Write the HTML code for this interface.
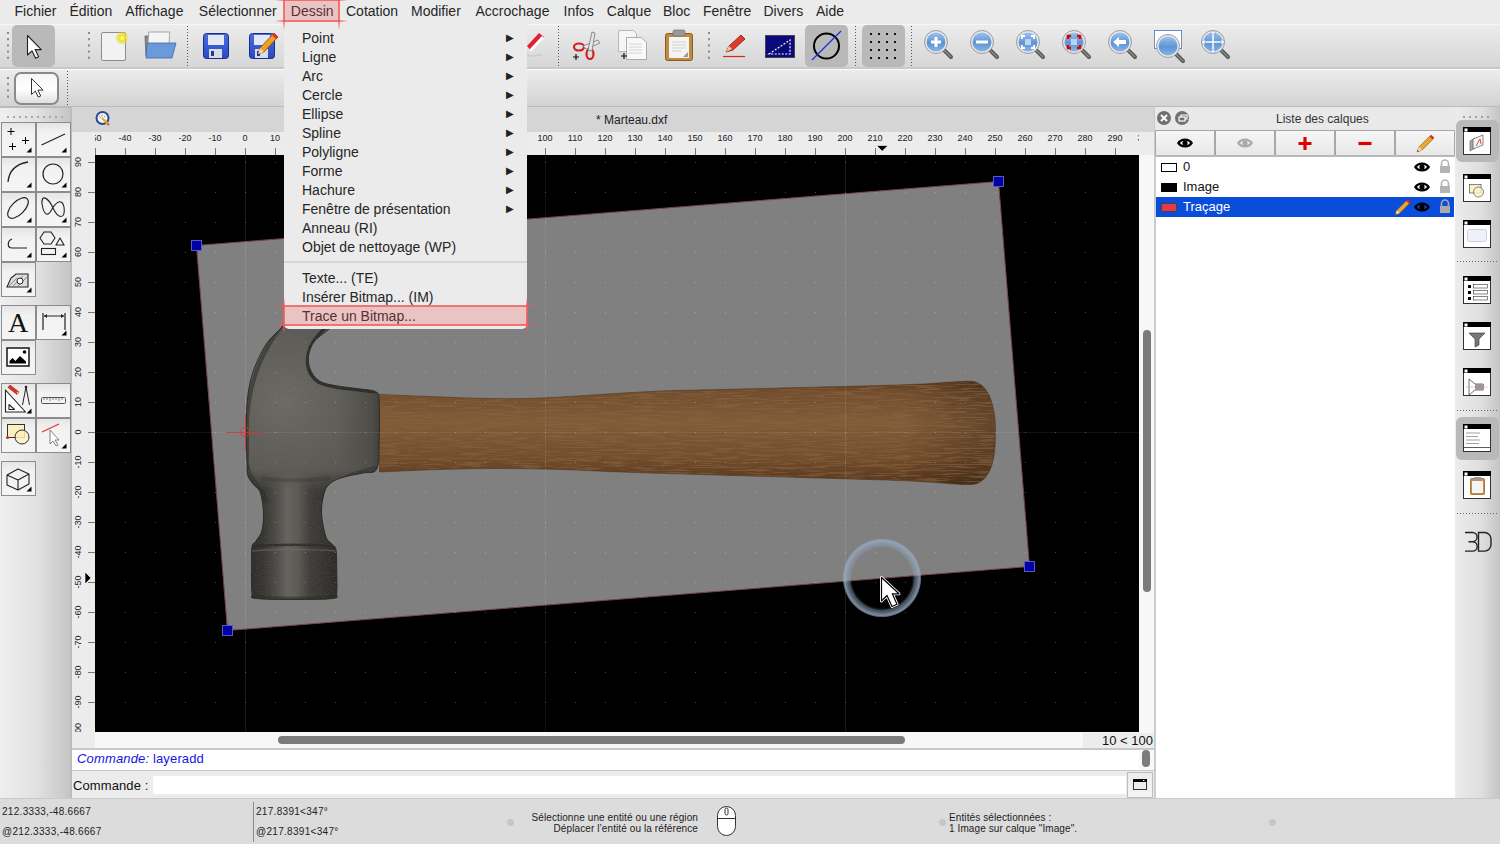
<!DOCTYPE html><html><head><meta charset="utf-8"><style>

*{margin:0;padding:0;box-sizing:border-box}
html,body{width:1500px;height:844px;overflow:hidden;background:#ececec;font-family:"Liberation Sans",sans-serif;color:#222;position:relative}
.abs{position:absolute}
#menubar{position:absolute;left:0;top:0;width:1500px;height:24px;background:#ebebeb}
.mi{position:absolute;top:3px;font-size:14px;line-height:17px;color:#262626}

#tb1{position:absolute;left:0;top:24px;width:1500px;height:45px;background:linear-gradient(#ececec,#d6d6d6);border-top:1px solid #f6f6f6;border-bottom:2px solid #c9c9c9}
#tb2{position:absolute;left:0;top:69px;width:1500px;height:39px;background:linear-gradient(#ececec,#d3d3d3);border-top:1px solid #fbfbfb;border-bottom:2px solid #bababa}
#ltb{position:absolute;left:0;top:108px;width:72px;height:690px;background:linear-gradient(90deg,#efefef,#e2e2e2 50%,#c6c6c6);border-right:2px solid #bdbdbd}
#dwin{position:absolute;left:72px;top:107px;width:1083px;height:691px;background:#ececec;border-left:1px solid #bdbdbd}
#dtitle{position:absolute;left:72px;top:107px;width:1083px;height:25px;background:#d5d5d5}
#ruler{position:absolute;left:72px;top:132px;width:1083px;height:23px;background:#ececec}
#vruler{position:absolute;left:72px;top:155px;width:23px;height:593px;background:#ececec}
#cv{position:absolute;left:0;top:0}
#hscroll{position:absolute;left:95px;top:732px;width:1060px;height:16px;background:#f7f7f7}
#hthumb{position:absolute;left:278px;top:736px;width:627px;height:8px;border-radius:4px;background:#7b7b7b}
#vscroll{position:absolute;left:1139px;top:155px;width:16px;height:577px;background:#f7f7f7}
#vthumb{position:absolute;left:1143px;top:330px;width:8px;height:262px;border-radius:4px;background:#7b7b7b}
#zoomlbl{position:absolute;left:1083px;top:733px;width:71px;height:15px;background:#ececec;font-size:13px;line-height:16px;text-align:right;color:#111;padding-right:1px}
#cmdhist{position:absolute;left:72px;top:748px;width:1083px;height:23px;background:#fff;border-top:2px solid #c8c8c8;border-bottom:1px solid #c8c8c8}
#cmdhist span{position:absolute;left:5px;top:0px;font-size:13px;line-height:17px;color:#1515e0;letter-spacing:0.15px}
#cmdbar{position:absolute;left:72px;top:771px;width:1083px;height:27px;background:#ececec}
#cmdinput{position:absolute;left:153px;top:776px;width:973px;height:18px;background:#fff}
#lp{position:absolute;left:1155px;top:107px;width:300px;height:691px;background:#fff;border-left:1px solid #cfcfcf}
#lptitle{position:absolute;left:1155px;top:107px;width:300px;height:23px;background:#e9e9e9}
#rtb{position:absolute;left:1455px;top:107px;width:45px;height:691px;background:linear-gradient(90deg,#ececec,#dedede 60%,#c4c4c4)}
#status{position:absolute;left:0;top:798px;width:1500px;height:46px;background:#dcdcdc;border-top:1px solid #c9c9c9}
.st{position:absolute;font-size:10px;letter-spacing:0.3px;line-height:12px;color:#222;white-space:nowrap}
#dd{position:absolute;left:284px;top:24px;width:243px;height:305px;background:#ebebeb;border-radius:0 0 5px 5px}
.ddi{position:absolute;left:18px;font-size:14px;line-height:19px;color:#262626;white-space:nowrap}
.dda{position:absolute;left:222px;font-size:10px;line-height:19px;color:#222}
#ddsep{position:absolute;left:0px;top:237px;width:243px;height:2px;background:#d6d6d6}

.lrow{position:absolute;left:1156px;width:298px;height:20px}
.lrow span{position:absolute;left:27px;top:2px;font-size:13px;line-height:16px;color:#111}
.sw{position:absolute;left:5px;top:6px;width:16px;height:9px}
.ltbtn{position:absolute;top:130px;height:26px;background:linear-gradient(#f6f6f6,#e8e8e8);border:1px solid #a8a8a8}
.tbox{position:absolute;width:35px;height:35px;background:linear-gradient(#fafafa,#e6e6e6);border:1px solid #8e8e8e}

</style></head><body>
<div id="menubar"><span class="mi" style="left:14.5px">Fichier</span><span class="mi" style="left:69.5px">Édition</span><span class="mi" style="left:125.3px">Affichage</span><span class="mi" style="left:198.8px">Sélectionner</span><span class="mi" style="left:290.8px">Dessin</span><span class="mi" style="left:346px">Cotation</span><span class="mi" style="left:411px">Modifier</span><span class="mi" style="left:475.5px">Accrochage</span><span class="mi" style="left:563.5px">Infos</span><span class="mi" style="left:606.8px">Calque</span><span class="mi" style="left:663px">Bloc</span><span class="mi" style="left:703px">Fenêtre</span><span class="mi" style="left:763.5px">Divers</span><span class="mi" style="left:816px">Aide</span></div>
<div id="tb1"></div><div id="tb2"></div>
<svg class="abs" style="left:0;top:0" width="1500" height="110"><defs><linearGradient id="lens" x1="0" y1="0" x2="0" y2="1"><stop offset="0" stop-color="#9cc2ee"/><stop offset="0.55" stop-color="#5d93d6"/><stop offset="1" stop-color="#8ab4e6"/></linearGradient><linearGradient id="flop" x1="0" y1="0" x2="0" y2="1"><stop offset="0" stop-color="#4a6fe0"/><stop offset="1" stop-color="#2a48c0"/></linearGradient><linearGradient id="btn2" x1="0" y1="0" x2="0" y2="1"><stop offset="0" stop-color="#f4f4f4"/><stop offset="0.5" stop-color="#ffffff"/><stop offset="1" stop-color="#dedede"/></linearGradient><radialGradient id="glow"><stop offset="0" stop-color="#ffffc0"/><stop offset="0.45" stop-color="#f0e020"/><stop offset="1" stop-color="#e8d820" stop-opacity="0"/></radialGradient></defs><rect x="7" y="32.0" width="2" height="2" fill="#8a8a8a"/><rect x="7" y="38.2" width="2" height="2" fill="#8a8a8a"/><rect x="7" y="44.4" width="2" height="2" fill="#8a8a8a"/><rect x="7" y="50.6" width="2" height="2" fill="#8a8a8a"/><rect x="7" y="56.8" width="2" height="2" fill="#8a8a8a"/><rect x="12" y="25" width="43" height="42" rx="5" fill="#b9b9b9"/><path d="M27.5,35.5v19.5l4.5,-4.2l3.6,7.4l3,-1.4l-3.5,-7.2h6.2z" fill="#fff" stroke="#222" stroke-width="1.1" stroke-linejoin="round"/><rect x="88" y="32.0" width="2" height="2" fill="#8a8a8a"/><rect x="88" y="38.2" width="2" height="2" fill="#8a8a8a"/><rect x="88" y="44.4" width="2" height="2" fill="#8a8a8a"/><rect x="88" y="50.6" width="2" height="2" fill="#8a8a8a"/><rect x="88" y="56.8" width="2" height="2" fill="#8a8a8a"/><rect x="101.5" y="32.5" width="24" height="28" rx="1.5" fill="#f2f2f2" stroke="#8c8c8c" stroke-width="1"/><circle cx="122" cy="38" r="7" fill="url(#glow)"/><path d="M145,36h8l2,2h4v18h-13z" fill="#8a8a8a" stroke="#666" stroke-width="0.8"/><path d="M151,32h21v20h-21z" fill="#f4f4f4" stroke="#999" stroke-width="0.8" transform="skewX(-4)"/><path d="M147,43h29l-4,15h-26z" fill="#6a9ad8" stroke="#3a6ab0" stroke-width="0.8"/><line x1="187.5" y1="26" x2="187.5" y2="67" stroke="#555" stroke-width="1" stroke-dasharray="1,2"/><rect x="203.5" y="33.5" width="25" height="25" rx="3" fill="url(#flop)" stroke="#1c2a8a" stroke-width="1"/><rect x="208" y="35" width="16" height="10" fill="#e4e8f4"/><rect x="209" y="49" width="13" height="9" fill="#d8dce8"/><rect x="211" y="51" width="3" height="5" fill="#1c3aa0"/><rect x="249.5" y="33.5" width="25" height="25" rx="3" fill="url(#flop)" stroke="#1c2a8a" stroke-width="1"/><rect x="254" y="35" width="16" height="10" fill="#e4e8f4"/><rect x="255" y="49" width="13" height="9" fill="#d8dce8"/><rect x="257" y="51" width="3" height="5" fill="#1c3aa0"/><path d="M258,54l2,-6l14,-15l4,4l-14,15z" fill="#f0a020" stroke="#7a4a10" stroke-width="0.8"/><path d="M272,35l4,4l2,-2l-4,-4z" fill="#e03030"/><path d="M258,54l2,-6l4,4z" fill="#f4d8a8"/><g transform="translate(527,32)"><path d="M0,14l12,-13l5,4l-13,14z" fill="#e02030"/><path d="M2,18l13,-14l2,2l-13,14z" fill="#fff"/><path d="M0,22l3,2l12,-1" stroke="#ccc" stroke-width="1.5" fill="none"/></g><line x1="558.5" y1="26" x2="558.5" y2="67" stroke="#555" stroke-width="1" stroke-dasharray="1,2"/><g fill="none" stroke="#d02020" stroke-width="2.2"><ellipse cx="579" cy="47" rx="5" ry="3.5"/><ellipse cx="590" cy="54" rx="3.5" ry="5"/></g><path d="M583,46l15,-6l2,3l-14,6z" fill="#e4e4e4" stroke="#777" stroke-width="0.8"/><path d="M588,50l4,-18l3,1l-3,18z" fill="#e4e4e4" stroke="#777" stroke-width="0.8"/><path d="M573,57h6M576,54v6" stroke="#111" stroke-width="1.2"/><path d="M618.5,30.5h15l3,3v18h-18z" fill="#f6f6f6" stroke="#aaa" stroke-width="0.8"/><path d="M626.5,37.5h15l5,5v17h-20z" fill="#f8f8f8" stroke="#999" stroke-width="0.8"/><path d="M629,44h13M629,47h13M629,50h13M629,53h13" stroke="#ccc" stroke-width="0.8"/><path d="M621,56h6M624,53v6" stroke="#111" stroke-width="1.2"/><rect x="665.5" y="33.5" width="27" height="27" rx="2" fill="#c08a40" stroke="#8a5a20" stroke-width="1"/><rect x="669" y="37" width="20" height="21" fill="#f4f4f4"/><rect x="673" y="30" width="12" height="6" rx="1.5" fill="#9a9a9a" stroke="#666" stroke-width="0.6"/><path d="M672,42h14M672,45h14M672,48h14M672,51h10" stroke="#c8c8c8" stroke-width="0.8"/><path d="M683,57l5,-5v5z" fill="#999"/><rect x="708" y="32.0" width="2" height="2" fill="#8a8a8a"/><rect x="708" y="38.2" width="2" height="2" fill="#8a8a8a"/><rect x="708" y="44.4" width="2" height="2" fill="#8a8a8a"/><rect x="708" y="50.6" width="2" height="2" fill="#8a8a8a"/><rect x="708" y="56.8" width="2" height="2" fill="#8a8a8a"/><path d="M726,52l3,-6l12,-11l4,4l-12,11z" fill="#e03a2a" stroke="#8a1a10" stroke-width="0.8"/><path d="M726,52l3,-6l3,3z" fill="#f0d0a0"/><path d="M723,56.5h22" stroke="#e02020" stroke-width="1.2"/><rect x="765.5" y="35.5" width="29" height="22" fill="#0a0a7a" stroke="#445" stroke-width="1"/><path d="M769,54l21,-14v14z" fill="none" stroke="#fff" stroke-width="1.2" stroke-dasharray="2,1.5"/><rect x="805" y="25" width="43" height="42" rx="5" fill="#b9b9b9"/><circle cx="826.5" cy="46" r="12.5" fill="none" stroke="#000" stroke-width="2"/><path d="M812,60l29,-29" stroke="#1a30e0" stroke-width="1.3"/><line x1="855.5" y1="26" x2="855.5" y2="67" stroke="#555" stroke-width="1" stroke-dasharray="1,2"/><rect x="862" y="25" width="43" height="42" rx="5" fill="#b9b9b9"/><rect x="870" y="33" width="2" height="2" fill="#111"/><rect x="870" y="41" width="2" height="2" fill="#111"/><rect x="870" y="49" width="2" height="2" fill="#111"/><rect x="870" y="57" width="2" height="2" fill="#111"/><rect x="878" y="33" width="2" height="2" fill="#111"/><rect x="878" y="41" width="2" height="2" fill="#111"/><rect x="878" y="49" width="2" height="2" fill="#111"/><rect x="878" y="57" width="2" height="2" fill="#111"/><rect x="886" y="33" width="2" height="2" fill="#111"/><rect x="886" y="41" width="2" height="2" fill="#111"/><rect x="886" y="49" width="2" height="2" fill="#111"/><rect x="886" y="57" width="2" height="2" fill="#111"/><rect x="894" y="33" width="2" height="2" fill="#111"/><rect x="894" y="41" width="2" height="2" fill="#111"/><rect x="894" y="49" width="2" height="2" fill="#111"/><rect x="894" y="57" width="2" height="2" fill="#111"/><line x1="911.5" y1="26" x2="911.5" y2="67" stroke="#555" stroke-width="1" stroke-dasharray="1,2"/><g><path d="M944,50l7,7" stroke="#555" stroke-width="4" stroke-linecap="round"/><path d="M944,50l7,7" stroke="#888" stroke-width="1.5" stroke-linecap="round"/><circle cx="936" cy="42" r="11.5" fill="#e8e8e8" stroke="#9a9a9a" stroke-width="1"/><circle cx="936" cy="42" r="9.5" fill="url(#lens)"/><path d="M931,42h10M936,37v10" stroke="#fff" stroke-width="3"/></g><g><path d="M990,50l7,7" stroke="#555" stroke-width="4" stroke-linecap="round"/><path d="M990,50l7,7" stroke="#888" stroke-width="1.5" stroke-linecap="round"/><circle cx="982" cy="42" r="11.5" fill="#e8e8e8" stroke="#9a9a9a" stroke-width="1"/><circle cx="982" cy="42" r="9.5" fill="url(#lens)"/><path d="M976,42h12" stroke="#fff" stroke-width="3"/></g><g><path d="M1036,50l7,7" stroke="#555" stroke-width="4" stroke-linecap="round"/><path d="M1036,50l7,7" stroke="#888" stroke-width="1.5" stroke-linecap="round"/><circle cx="1028" cy="42" r="11.5" fill="#e8e8e8" stroke="#9a9a9a" stroke-width="1"/><circle cx="1028" cy="42" r="9.5" fill="url(#lens)"/><path d="M1022,39v-3h3M1031,36h3v3M1034,45v3h-3M1025,48h-3v-3" stroke="#fff" stroke-width="1.8" fill="none"/><rect x="1025" y="39" width="6" height="6" fill="#bcd4f0"/></g><g><path d="M1082,50l7,7" stroke="#555" stroke-width="4" stroke-linecap="round"/><path d="M1082,50l7,7" stroke="#888" stroke-width="1.5" stroke-linecap="round"/><circle cx="1074" cy="42" r="11.5" fill="#e8e8e8" stroke="#9a9a9a" stroke-width="1"/><circle cx="1074" cy="42" r="9.5" fill="url(#lens)"/><path d="M1068,39v-3h3M1077,36h3v3M1080,45v3h-3M1071,48h-3v-3" stroke="#e00000" stroke-width="2.5" fill="none"/><rect x="1071" y="39" width="6" height="6" fill="#bcd4f0"/></g><g><path d="M1128,50l7,7" stroke="#555" stroke-width="4" stroke-linecap="round"/><path d="M1128,50l7,7" stroke="#888" stroke-width="1.5" stroke-linecap="round"/><circle cx="1120" cy="42" r="11.5" fill="#e8e8e8" stroke="#9a9a9a" stroke-width="1"/><circle cx="1120" cy="42" r="9.5" fill="url(#lens)"/><path d="M1113,42l6,-5v3h7v4h-7v3z" fill="#fff"/></g><rect x="1154.5" y="30.5" width="27" height="18" fill="#fff" stroke="#6c8cc8" stroke-width="1"/><g><path d="M1176,54l7,7" stroke="#555" stroke-width="4" stroke-linecap="round"/><path d="M1176,54l7,7" stroke="#888" stroke-width="1.5" stroke-linecap="round"/><circle cx="1168" cy="46" r="11.5" fill="#e8e8e8" stroke="#9a9a9a" stroke-width="1"/><circle cx="1168" cy="46" r="9.5" fill="url(#lens)"/></g><g><path d="M1221,50l7,7" stroke="#555" stroke-width="4" stroke-linecap="round"/><path d="M1221,50l7,7" stroke="#888" stroke-width="1.5" stroke-linecap="round"/><circle cx="1213" cy="42" r="11.5" fill="#e8e8e8" stroke="#9a9a9a" stroke-width="1"/><circle cx="1213" cy="42" r="9.5" fill="url(#lens)"/><path d="M1213,31v22M1202,42h22" stroke="#fff" stroke-width="1.5"/><path d="M1213,30l-3,4h6zM1213,54l-3,-4h6zM1201,42l4,-3v6zM1225,42l-4,-3v6z" fill="#fff" stroke="#5a8ad0" stroke-width="0.6"/></g><rect x="7" y="77.0" width="2" height="2" fill="#8a8a8a"/><rect x="7" y="83.2" width="2" height="2" fill="#8a8a8a"/><rect x="7" y="89.4" width="2" height="2" fill="#8a8a8a"/><rect x="7" y="95.6" width="2" height="2" fill="#8a8a8a"/><rect x="15" y="73" width="43" height="31" rx="6" fill="url(#btn2)" stroke="#8a8a8a" stroke-width="2"/><path d="M31.5,78.5v16l3.8,-3.4l3,6l2.4,-1.1l-2.8,-5.9h5.2z" fill="#fff" stroke="#333" stroke-width="1" stroke-linejoin="round"/><line x1="67.5" y1="71" x2="67.5" y2="106" stroke="#555" stroke-width="1" stroke-dasharray="1,2"/></svg>
<div id="ltb"></div>
<svg class="abs" style="left:0;top:107px" width="72" height="400"><defs><linearGradient id="tbg" x1="0" y1="0" x2="0" y2="1"><stop offset="0" stop-color="#e4e4e4"/><stop offset="0.3" stop-color="#f2f2f2"/><stop offset="1" stop-color="#f5f5f5"/></linearGradient></defs><rect x="7" y="9" width="2" height="2" fill="#a8a8a8"/><rect x="13" y="9" width="2" height="2" fill="#a8a8a8"/><rect x="19" y="9" width="2" height="2" fill="#a8a8a8"/><rect x="25" y="9" width="2" height="2" fill="#a8a8a8"/><rect x="31" y="9" width="2" height="2" fill="#a8a8a8"/><rect x="37" y="9" width="2" height="2" fill="#a8a8a8"/><rect x="43" y="9" width="2" height="2" fill="#a8a8a8"/><rect x="49" y="9" width="2" height="2" fill="#a8a8a8"/><rect x="55" y="9" width="2" height="2" fill="#a8a8a8"/><rect x="61" y="9" width="2" height="2" fill="#a8a8a8"/><rect x="1.5" y="15.5" width="34" height="34" fill="url(#tbg)" stroke="#8c8c8c" stroke-width="1"/><rect x="36.5" y="15.5" width="34" height="34" fill="url(#tbg)" stroke="#8c8c8c" stroke-width="1"/><rect x="1.5" y="50.5" width="34" height="34" fill="url(#tbg)" stroke="#8c8c8c" stroke-width="1"/><rect x="36.5" y="50.5" width="34" height="34" fill="url(#tbg)" stroke="#8c8c8c" stroke-width="1"/><rect x="1.5" y="85.5" width="34" height="34" fill="url(#tbg)" stroke="#8c8c8c" stroke-width="1"/><rect x="36.5" y="85.5" width="34" height="34" fill="url(#tbg)" stroke="#8c8c8c" stroke-width="1"/><rect x="1.5" y="120.5" width="34" height="34" fill="url(#tbg)" stroke="#8c8c8c" stroke-width="1"/><rect x="36.5" y="120.5" width="34" height="34" fill="url(#tbg)" stroke="#8c8c8c" stroke-width="1"/><rect x="1.5" y="155.5" width="34" height="34" fill="url(#tbg)" stroke="#8c8c8c" stroke-width="1"/><path d="M7.5,24.5h7M11,21v7 M22,33.5h7M25.5,30v7 M9,39.5h7M12.5,36v7" stroke="#000" stroke-width="1"/><path d="M31.5,40.5v5h-5z" fill="#000"/><path d="M41.5,38l23.5,-11" stroke="#222" stroke-width="1.1"/><path d="M66.5,40.5v5h-5z" fill="#000"/><path d="M8,75C9,64 16,57 28,55" stroke="#222" stroke-width="1.3" fill="none"/><path d="M31.5,75.5v5h-5z" fill="#000"/><circle cx="53" cy="67" r="10" stroke="#222" stroke-width="1.2" fill="none"/><path d="M66.5,75.5v5h-5z" fill="#000"/><ellipse cx="18" cy="101" rx="13" ry="6.5" transform="rotate(-45 18 101)" stroke="#222" stroke-width="1.2" fill="none"/><path d="M31.5,110.5v5h-5z" fill="#000"/><path d="M42,97C41,87 48,90 53,101C58,112 66,113 64,100C62,91 56,95 52,102C48,110 44,109 42,97z" stroke="#222" stroke-width="1.1" fill="none"/><path d="M66.5,110.5v5h-5z" fill="#000"/><path d="M12,132C7,134 7,141 12,141h15" stroke="#222" stroke-width="1.2" fill="none"/><path d="M31.5,145.5v5h-5z" fill="#000"/><path d="M40,131l4,-6h7l4,6l-4,6h-7z" stroke="#222" stroke-width="1.1" fill="none"/><path d="M56,138l4,-7l4,7z" stroke="#222" stroke-width="1.1" fill="none"/><rect x="41.5" y="141.5" width="14" height="6" stroke="#222" stroke-width="1.1" fill="none"/><path d="M66.5,145.5v5h-5z" fill="#000"/><path d="M7,180l4,-9l5,-4h12v13z" stroke="#222" stroke-width="1.1" fill="#ddd"/><path d="M9,179l8,-8M13,179l10,-10M18,179l9,-9" stroke="#666" stroke-width="0.7"/><circle cx="20" cy="174" r="3" fill="#fff" stroke="#222" stroke-width="1"/><path d="M31.5,180.5v5h-5z" fill="#000"/><rect x="1.5" y="198.5" width="34" height="34" fill="url(#tbg)" stroke="#8c8c8c" stroke-width="1"/><rect x="36.5" y="198.5" width="34" height="34" fill="url(#tbg)" stroke="#8c8c8c" stroke-width="1"/><rect x="1.5" y="233.5" width="34" height="34" fill="url(#tbg)" stroke="#8c8c8c" stroke-width="1"/><text x="18" y="225" font-family="Liberation Serif" font-size="28" text-anchor="middle" fill="#111">A</text><path d="M43,206v17M65,206v17M44,209h20" stroke="#222" stroke-width="1.2" fill="none"/><path d="M44,209l3,-2v4zM64,209l-3,-2v4z" fill="#222"/><path d="M66.5,223.5v5h-5z" fill="#000"/><rect x="7" y="241" width="22" height="18" fill="#fff" stroke="#222" stroke-width="1.6"/><path d="M9.5,256.5v-2.5l3,-3l3,3l4.5,-5l6,5.5v2z" fill="#000"/><circle cx="24.5" cy="245" r="1.8" fill="#000"/></svg><svg class="abs" style="left:0;top:380px" width="72" height="120"><rect x="1.5" y="3.5" width="34" height="34" fill="url(#tbg)" stroke="#8c8c8c" stroke-width="1"/><rect x="36.5" y="3.5" width="34" height="34" fill="url(#tbg)" stroke="#8c8c8c" stroke-width="1"/><rect x="1.5" y="38.5" width="34" height="34" fill="url(#tbg)" stroke="#8c8c8c" stroke-width="1"/><rect x="36.5" y="38.5" width="34" height="34" fill="url(#tbg)" stroke="#8c8c8c" stroke-width="1"/><rect x="1.5" y="81.5" width="34" height="34" fill="url(#tbg)" stroke="#8c8c8c" stroke-width="1"/><path d="M5.5,10v22h20z M9,24.5v5h5.5z" stroke="#222" stroke-width="1.1" fill="#fff" stroke-linejoin="round"/><path d="M10,5l9,7l-2,2.5l-9,-7z" fill="#e03020" stroke="#801010" stroke-width="0.5"/><path d="M17,12l2,2" stroke="#f0c080" stroke-width="1.5"/><path d="M26,7l-3.5,18M26,7l3.5,18" stroke="#222" stroke-width="1" fill="none"/><circle cx="26" cy="7" r="1.3" fill="#222"/><path d="M31.5,28.5v5h-5z" fill="#000"/><rect x="41.5" y="17.5" width="24" height="6" rx="1" fill="#f4f4f4" stroke="#555" stroke-width="1"/><path d="M44,18v2M47,18v2M50,18v3M53,18v2M56,18v2M59,18v3M62,18v2" stroke="#555" stroke-width="0.7"/><rect x="7.5" y="44.5" width="17" height="13" fill="#fdf0c0" stroke="#333" stroke-width="1"/><circle cx="22" cy="57" r="7" fill="#fdf0c0" fill-opacity="0.85" stroke="#333" stroke-width="1"/><circle cx="7.5" cy="57.5" r="1.5" fill="#e02020"/><path d="M42,52l17,-8" stroke="#e03030" stroke-width="1.2"/><path d="M50,50v14l3,-3l3,5l2,-1l-3,-5h4z" fill="#fff" stroke="#666" stroke-width="0.8"/><path d="M66.5,63.5v5h-5z" fill="#000"/><path d="M7,95l11,-6l11,5v10l-11,6l-11,-5z M7,95l11,5l11,-6 M18,100v10" stroke="#222" stroke-width="1.1" fill="none" stroke-linejoin="round"/><path d="M31.5,106.5v5h-5z" fill="#000"/></svg>
<div id="dwin"></div><div id="dtitle"><span class="abs" style="left:524px;top:6px;font-size:12px;line-height:15px;color:#222">* Marteau.dxf</span></div><svg class="abs" style="left:95px;top:111px" width="16" height="16"><circle cx="7.5" cy="7" r="6" fill="#f4f4f4" stroke="#2a4a9a" stroke-width="2"/><path d="M4,5l2,2M7,3.5v2M10,5l-1,1" stroke="#c06060" stroke-width="0.8"/><path d="M7,7l6,6" stroke="#e8b020" stroke-width="2.2"/><path d="M12.5,12.5l1.5,1.5" stroke="#d05050" stroke-width="2"/></svg><div id="ruler"></div><div id="vruler"></div>
<svg id="rul" width="1500" height="844" style="position:absolute;left:0;top:0">
<defs><clipPath id="hrc"><rect x="95" y="130" width="1044" height="25"/></clipPath><clipPath id="vrc"><rect x="72" y="155" width="23" height="577"/></clipPath></defs>
<g clip-path="url(#hrc)"><g font-family="Liberation Sans" font-size="9" fill="#222" text-anchor="middle">
<text x="95" y="141">-50</text>
<text x="125" y="141">-40</text>
<text x="155" y="141">-30</text>
<text x="185" y="141">-20</text>
<text x="215" y="141">-10</text>
<text x="245" y="141">0</text>
<text x="275" y="141">10</text>
<text x="305" y="141">20</text>
<text x="335" y="141">30</text>
<text x="365" y="141">40</text>
<text x="395" y="141">50</text>
<text x="425" y="141">60</text>
<text x="455" y="141">70</text>
<text x="485" y="141">80</text>
<text x="515" y="141">90</text>
<text x="545" y="141">100</text>
<text x="575" y="141">110</text>
<text x="605" y="141">120</text>
<text x="635" y="141">130</text>
<text x="665" y="141">140</text>
<text x="695" y="141">150</text>
<text x="725" y="141">160</text>
<text x="755" y="141">170</text>
<text x="785" y="141">180</text>
<text x="815" y="141">190</text>
<text x="845" y="141">200</text>
<text x="875" y="141">210</text>
<text x="905" y="141">220</text>
<text x="935" y="141">230</text>
<text x="965" y="141">240</text>
<text x="995" y="141">250</text>
<text x="1025" y="141">260</text>
<text x="1055" y="141">270</text>
<text x="1085" y="141">280</text>
<text x="1115" y="141">290</text>
<text x="1145" y="141">300</text>
</g>
<path d="M95.5,148v7M125.5,148v7M155.5,148v7M185.5,148v7M215.5,148v7M245.5,148v7M275.5,148v7M305.5,148v7M335.5,148v7M365.5,148v7M395.5,148v7M425.5,148v7M455.5,148v7M485.5,148v7M515.5,148v7M545.5,148v7M575.5,148v7M605.5,148v7M635.5,148v7M665.5,148v7M695.5,148v7M725.5,148v7M755.5,148v7M785.5,148v7M815.5,148v7M845.5,148v7M875.5,148v7M905.5,148v7M935.5,148v7M965.5,148v7M995.5,148v7M1025.5,148v7M1055.5,148v7M1085.5,148v7M1115.5,148v7M1145.5,148v7" stroke="#777" stroke-width="1"/></g>
<g clip-path="url(#vrc)"><g font-family="Liberation Sans" font-size="9" fill="#222" text-anchor="middle">
<text transform="translate(78,162) rotate(-90)" y="3">90</text>
<text transform="translate(78,192) rotate(-90)" y="3">80</text>
<text transform="translate(78,222) rotate(-90)" y="3">70</text>
<text transform="translate(78,252) rotate(-90)" y="3">60</text>
<text transform="translate(78,282) rotate(-90)" y="3">50</text>
<text transform="translate(78,312) rotate(-90)" y="3">40</text>
<text transform="translate(78,342) rotate(-90)" y="3">30</text>
<text transform="translate(78,372) rotate(-90)" y="3">20</text>
<text transform="translate(78,402) rotate(-90)" y="3">10</text>
<text transform="translate(78,432) rotate(-90)" y="3">0</text>
<text transform="translate(78,462) rotate(-90)" y="3">-10</text>
<text transform="translate(78,492) rotate(-90)" y="3">-20</text>
<text transform="translate(78,522) rotate(-90)" y="3">-30</text>
<text transform="translate(78,552) rotate(-90)" y="3">-40</text>
<text transform="translate(78,582) rotate(-90)" y="3">-50</text>
<text transform="translate(78,612) rotate(-90)" y="3">-60</text>
<text transform="translate(78,642) rotate(-90)" y="3">-70</text>
<text transform="translate(78,672) rotate(-90)" y="3">-80</text>
<text transform="translate(78,702) rotate(-90)" y="3">-90</text>
<text transform="translate(78,732) rotate(-90)" y="3">-100</text>
</g>
<path d="M88,162.5h7M88,192.5h7M88,222.5h7M88,252.5h7M88,282.5h7M88,312.5h7M88,342.5h7M88,372.5h7M88,402.5h7M88,432.5h7M88,462.5h7M88,492.5h7M88,522.5h7M88,552.5h7M88,582.5h7M88,612.5h7M88,642.5h7M88,672.5h7M88,702.5h7M88,732.5h7" stroke="#777" stroke-width="1"/></g>
<path d="M876.5,145.5h11.5l-5.75,5.75z" fill="#000" stroke="#fff" stroke-width="0.8" stroke-opacity="0.8"/>
<path d="M85,572v12l6,-6z" fill="#000" stroke="#fff" stroke-width="0.8" stroke-opacity="0.8"/>
</svg>
<svg id="cv" width="1500" height="844" viewBox="0 0 1500 844">
<defs><clipPath id="cclip"><rect x="95" y="155" width="1044" height="577"/></clipPath></defs>
<rect x="95" y="155" width="1044" height="577" fill="#000"/>
<g clip-path="url(#cclip)">
<polygon points="196.5,245.5 998.5,181.5 1029.5,566.5 227.5,630.5" fill="#808080" stroke="#7a4444" stroke-width="1"/>
<defs>
<linearGradient id="wood" x1="0" y1="0" x2="0" y2="1"><stop offset="0" stop-color="#5a3a1f"/><stop offset="0.1" stop-color="#724e2e"/><stop offset="0.4" stop-color="#825c38"/><stop offset="0.75" stop-color="#734d2c"/><stop offset="1" stop-color="#54361c"/></linearGradient>
<linearGradient id="woodend" x1="0" y1="0" x2="1" y2="0"><stop offset="0" stop-color="#000" stop-opacity="0"/><stop offset="0.85" stop-color="#000" stop-opacity="0"/><stop offset="1" stop-color="#000" stop-opacity="0.25"/></linearGradient>
<linearGradient id="metal" x1="246" y1="0" x2="380" y2="0" gradientUnits="userSpaceOnUse"><stop offset="0" stop-color="#45443f"/><stop offset="0.08" stop-color="#5f5d58"/><stop offset="0.3" stop-color="#67655f"/><stop offset="0.7" stop-color="#5a5853"/><stop offset="0.95" stop-color="#4a4945"/><stop offset="1" stop-color="#3a3936"/></linearGradient>
</defs>
<path d="M379.5,394.5C387.9,394.8 411.6,395.8 430.0,396.5C448.4,397.2 471.7,398.2 490.0,398.5C508.3,398.8 521.7,398.7 540.0,398.0C558.3,397.3 580.0,395.7 600.0,394.5C620.0,393.3 640.0,391.8 660.0,391.0C680.0,390.2 696.7,390.1 720.0,389.5C743.3,388.9 768.3,388.3 800.0,387.5C831.7,386.7 883.3,385.5 910.0,384.5C936.7,383.5 948.7,381.8 960.0,381.5C971.3,381.2 973.2,380.8 978.0,383.0C982.8,385.2 986.2,389.7 989.0,395.0C991.8,400.3 993.4,408.7 994.5,415.0C995.6,421.3 995.3,430.0 995.5,433.0C995.3,436.2 995.4,445.8 994.5,452.0C993.6,458.2 992.4,465.0 990.0,470.0C987.6,475.0 984.5,479.6 980.0,482.0C975.5,484.4 974.7,484.7 963.0,484.5C951.3,484.3 937.2,482.2 910.0,481.0C882.8,479.8 835.0,478.6 800.0,477.5C765.0,476.4 730.0,475.4 700.0,474.5C670.0,473.6 643.3,472.8 620.0,472.0C596.7,471.2 580.0,470.1 560.0,469.5C540.0,468.9 520.0,468.5 500.0,468.5C480.0,468.5 460.1,468.9 440.0,469.5C419.9,470.1 389.6,471.6 379.5,472.0Z" fill="url(#wood)"/>
<path d="M379.5,394.5C387.9,394.8 411.6,395.8 430.0,396.5C448.4,397.2 471.7,398.2 490.0,398.5C508.3,398.8 521.7,398.7 540.0,398.0C558.3,397.3 580.0,395.7 600.0,394.5C620.0,393.3 640.0,391.8 660.0,391.0C680.0,390.2 696.7,390.1 720.0,389.5C743.3,388.9 768.3,388.3 800.0,387.5C831.7,386.7 883.3,385.5 910.0,384.5C936.7,383.5 948.7,381.8 960.0,381.5C971.3,381.2 973.2,380.8 978.0,383.0C982.8,385.2 986.2,389.7 989.0,395.0C991.8,400.3 993.4,408.7 994.5,415.0C995.6,421.3 995.3,430.0 995.5,433.0C995.3,436.2 995.4,445.8 994.5,452.0C993.6,458.2 992.4,465.0 990.0,470.0C987.6,475.0 984.5,479.6 980.0,482.0C975.5,484.4 974.7,484.7 963.0,484.5C951.3,484.3 937.2,482.2 910.0,481.0C882.8,479.8 835.0,478.6 800.0,477.5C765.0,476.4 730.0,475.4 700.0,474.5C670.0,473.6 643.3,472.8 620.0,472.0C596.7,471.2 580.0,470.1 560.0,469.5C540.0,468.9 520.0,468.5 500.0,468.5C480.0,468.5 460.1,468.9 440.0,469.5C419.9,470.1 389.6,471.6 379.5,472.0Z" fill="url(#woodend)"/>
<filter id="grain" x="370" y="370" width="640" height="130" filterUnits="userSpaceOnUse"><feTurbulence type="fractalNoise" baseFrequency="0.035 0.7" numOctaves="3" seed="11" result="n"/><feColorMatrix in="n" type="matrix" values="0 0 0 0 0.25  0 0 0 0 0.13  0 0 0 0 0.06  0 0 0 6 -2.9" result="a"/><feComposite in="a" in2="SourceGraphic" operator="in"/></filter>
<path d="M379.5,394.5C387.9,394.8 411.6,395.8 430.0,396.5C448.4,397.2 471.7,398.2 490.0,398.5C508.3,398.8 521.7,398.7 540.0,398.0C558.3,397.3 580.0,395.7 600.0,394.5C620.0,393.3 640.0,391.8 660.0,391.0C680.0,390.2 696.7,390.1 720.0,389.5C743.3,388.9 768.3,388.3 800.0,387.5C831.7,386.7 883.3,385.5 910.0,384.5C936.7,383.5 948.7,381.8 960.0,381.5C971.3,381.2 973.2,380.8 978.0,383.0C982.8,385.2 986.2,389.7 989.0,395.0C991.8,400.3 993.4,408.7 994.5,415.0C995.6,421.3 995.3,430.0 995.5,433.0C995.3,436.2 995.4,445.8 994.5,452.0C993.6,458.2 992.4,465.0 990.0,470.0C987.6,475.0 984.5,479.6 980.0,482.0C975.5,484.4 974.7,484.7 963.0,484.5C951.3,484.3 937.2,482.2 910.0,481.0C882.8,479.8 835.0,478.6 800.0,477.5C765.0,476.4 730.0,475.4 700.0,474.5C670.0,473.6 643.3,472.8 620.0,472.0C596.7,471.2 580.0,470.1 560.0,469.5C540.0,468.9 520.0,468.5 500.0,468.5C480.0,468.5 460.1,468.9 440.0,469.5C419.9,470.1 389.6,471.6 379.5,472.0Z" fill="#000" filter="url(#grain)" opacity="0.55"/>
<path d="M379.5,394.5C387.9,394.8 411.6,395.8 430.0,396.5C448.4,397.2 471.7,398.2 490.0,398.5C508.3,398.8 521.7,398.7 540.0,398.0C558.3,397.3 580.0,395.7 600.0,394.5C620.0,393.3 640.0,391.8 660.0,391.0C680.0,390.2 696.7,390.1 720.0,389.5C743.3,388.9 768.3,388.3 800.0,387.5C831.7,386.7 883.3,385.5 910.0,384.5C936.7,383.5 948.7,381.8 960.0,381.5C971.3,381.2 973.2,380.8 978.0,383.0C982.8,385.2 986.2,389.7 989.0,395.0C991.8,400.3 993.4,408.7 994.5,415.0C995.6,421.3 995.3,430.0 995.5,433.0C995.3,436.2 995.4,445.8 994.5,452.0C993.6,458.2 992.4,465.0 990.0,470.0C987.6,475.0 984.5,479.6 980.0,482.0C975.5,484.4 974.7,484.7 963.0,484.5C951.3,484.3 937.2,482.2 910.0,481.0C882.8,479.8 835.0,478.6 800.0,477.5C765.0,476.4 730.0,475.4 700.0,474.5C670.0,473.6 643.3,472.8 620.0,472.0C596.7,471.2 580.0,470.1 560.0,469.5C540.0,468.9 520.0,468.5 500.0,468.5C480.0,468.5 460.1,468.9 440.0,469.5C419.9,470.1 389.6,471.6 379.5,472.0Z" fill="none" stroke="#4a3018" stroke-opacity="0.5" stroke-width="1"/>
<defs><linearGradient id="neckg" x1="250" y1="0" x2="338" y2="0" gradientUnits="userSpaceOnUse"><stop offset="0" stop-color="#2c2b28"/><stop offset="0.15" stop-color="#363532"/><stop offset="0.3" stop-color="#4e4d49"/><stop offset="0.42" stop-color="#686661"/><stop offset="0.55" stop-color="#5c5a55"/><stop offset="0.68" stop-color="#3f3e3a"/><stop offset="0.85" stop-color="#343330"/><stop offset="1" stop-color="#2a2927"/></linearGradient><radialGradient id="blockhl" cx="285" cy="400" r="85" gradientUnits="userSpaceOnUse"><stop offset="0" stop-color="#6f6d68" stop-opacity="1"/><stop offset="1" stop-color="#6e6c67" stop-opacity="0"/></radialGradient><linearGradient id="blockr" x1="340" y1="0" x2="380" y2="0" gradientUnits="userSpaceOnUse"><stop offset="0" stop-color="#2a2927" stop-opacity="0"/><stop offset="0.8" stop-color="#2a2927" stop-opacity="0.25"/><stop offset="1" stop-color="#2a2927" stop-opacity="0.6"/></linearGradient><clipPath id="headclip"><path d="M300.0,305.0C289.5,307.5 287.5,320.7 282.0,327.0C276.5,333.3 271.3,336.8 267.0,343.0C262.7,349.2 258.8,357.3 256.0,364.0C253.2,370.7 251.5,376.2 250.0,383.0C248.5,389.8 247.6,396.5 247.0,405.0C246.4,413.5 246.4,424.5 246.4,434.0C246.4,443.5 246.7,455.0 247.0,462.0C247.3,469.0 246.8,472.2 248.0,476.0C249.2,479.8 251.9,482.2 254.0,485.0C256.1,487.8 258.9,488.3 260.5,493.0C262.1,497.7 263.3,506.7 263.5,513.0C263.7,519.3 263.1,526.3 261.8,531.0C260.6,535.7 257.6,538.3 256.0,541.0C254.4,543.7 252.8,542.2 252.0,547.0C251.2,551.8 251.5,562.3 251.5,570.0C251.5,577.7 251.3,588.3 252.0,593.0C252.7,597.7 248.3,597.3 255.5,598.4C262.7,599.5 282.1,599.5 295.0,599.5C307.9,599.5 326.1,599.5 333.0,598.4C339.9,597.3 336.1,597.7 336.7,593.0C337.3,588.3 336.8,577.2 336.7,570.0C336.6,562.8 336.8,554.3 336.0,550.0C335.2,545.7 333.7,546.2 332.0,544.0C330.3,541.8 327.8,542.2 326.0,537.0C324.2,531.8 321.8,520.5 321.5,513.0C321.2,505.5 322.8,497.2 324.5,492.0C326.2,486.8 328.4,484.6 332.0,482.0C335.6,479.4 340.8,478.0 346.0,476.5C351.2,475.0 357.9,474.2 363.0,473.0C368.1,471.8 373.8,474.2 376.5,469.5C379.2,464.8 378.6,456.6 379.0,445.0C379.4,433.4 379.7,408.9 379.0,400.0C378.3,391.1 378.2,393.3 375.0,391.5C371.8,389.7 366.8,390.0 360.0,389.0C353.2,388.0 340.8,386.8 334.0,385.4C327.2,384.0 322.9,383.3 319.0,380.7C315.1,378.1 312.2,374.1 310.5,370.0C308.8,365.9 307.8,360.8 308.5,356.0C309.2,351.2 311.1,345.6 314.6,341.0C318.2,336.4 324.7,333.3 329.8,328.5C334.9,323.7 350.0,315.9 345.0,312.0C340.0,308.1 310.5,302.5 300.0,305.0Z"/></clipPath></defs>
<path d="M300.0,305.0C289.5,307.5 287.5,320.7 282.0,327.0C276.5,333.3 271.3,336.8 267.0,343.0C262.7,349.2 258.8,357.3 256.0,364.0C253.2,370.7 251.5,376.2 250.0,383.0C248.5,389.8 247.6,396.5 247.0,405.0C246.4,413.5 246.4,424.5 246.4,434.0C246.4,443.5 246.7,455.0 247.0,462.0C247.3,469.0 246.8,472.2 248.0,476.0C249.2,479.8 251.9,482.2 254.0,485.0C256.1,487.8 258.9,488.3 260.5,493.0C262.1,497.7 263.3,506.7 263.5,513.0C263.7,519.3 263.1,526.3 261.8,531.0C260.6,535.7 257.6,538.3 256.0,541.0C254.4,543.7 252.8,542.2 252.0,547.0C251.2,551.8 251.5,562.3 251.5,570.0C251.5,577.7 251.3,588.3 252.0,593.0C252.7,597.7 248.3,597.3 255.5,598.4C262.7,599.5 282.1,599.5 295.0,599.5C307.9,599.5 326.1,599.5 333.0,598.4C339.9,597.3 336.1,597.7 336.7,593.0C337.3,588.3 336.8,577.2 336.7,570.0C336.6,562.8 336.8,554.3 336.0,550.0C335.2,545.7 333.7,546.2 332.0,544.0C330.3,541.8 327.8,542.2 326.0,537.0C324.2,531.8 321.8,520.5 321.5,513.0C321.2,505.5 322.8,497.2 324.5,492.0C326.2,486.8 328.4,484.6 332.0,482.0C335.6,479.4 340.8,478.0 346.0,476.5C351.2,475.0 357.9,474.2 363.0,473.0C368.1,471.8 373.8,474.2 376.5,469.5C379.2,464.8 378.6,456.6 379.0,445.0C379.4,433.4 379.7,408.9 379.0,400.0C378.3,391.1 378.2,393.3 375.0,391.5C371.8,389.7 366.8,390.0 360.0,389.0C353.2,388.0 340.8,386.8 334.0,385.4C327.2,384.0 322.9,383.3 319.0,380.7C315.1,378.1 312.2,374.1 310.5,370.0C308.8,365.9 307.8,360.8 308.5,356.0C309.2,351.2 311.1,345.6 314.6,341.0C318.2,336.4 324.7,333.3 329.8,328.5C334.9,323.7 350.0,315.9 345.0,312.0C340.0,308.1 310.5,302.5 300.0,305.0Z" fill="#5b5954"/>
<g clip-path="url(#headclip)">
<rect x="240" y="300" width="145" height="180" fill="url(#blockhl)"/>
<rect x="340" y="385" width="45" height="90" fill="url(#blockr)"/>
<path d="M300,305C270,335 250,370 247,420L247,470" stroke="#2c2b28" stroke-width="4" fill="none" stroke-opacity="0.6"/>
<defs><linearGradient id="neckfade" x1="0" y1="470" x2="0" y2="492" gradientUnits="userSpaceOnUse"><stop offset="0" stop-color="#fff" stop-opacity="0"/><stop offset="1" stop-color="#fff" stop-opacity="1"/></linearGradient><mask id="neckmask"><rect x="240" y="470" width="150" height="135" fill="url(#neckfade)"/></mask></defs>
<rect x="240" y="470" width="150" height="135" fill="url(#neckg)" mask="url(#neckmask)"/>
<path d="M247,466C250,482 262,488 266,502" stroke="#2a2927" stroke-width="5" fill="none" stroke-opacity="0.5"/>
<path d="M378,468C352,474 332,480 322,500" stroke="#2a2927" stroke-width="5" fill="none" stroke-opacity="0.5"/>
<path d="M262,478C280,481 305,481 330,478" stroke="#2a2927" stroke-width="4" fill="none" stroke-opacity="0.25"/>
<path d="M250,547C270,544 315,544 338,547" stroke="#2a2927" stroke-width="2.5" fill="none" stroke-opacity="0.8"/>
<path d="M252,551C272,549 315,549 336,551" stroke="#77746e" stroke-width="1.5" fill="none" stroke-opacity="0.5"/>
<path d="M252,596C272,599 315,599 336,596" stroke="#2a2927" stroke-width="3" fill="none" stroke-opacity="0.6"/>
<path d="M348,309C332,322 316,334 310,348C305,362 308,374 318,382C328,387 345,388 376,392" stroke="#252422" stroke-width="3.5" fill="none" stroke-opacity="0.85"/>
<filter id="mnoise" x="240" y="300" width="145" height="305" filterUnits="userSpaceOnUse"><feTurbulence type="fractalNoise" baseFrequency="0.5 0.9" numOctaves="2" seed="3"/><feColorMatrix type="matrix" values="0 0 0 0 0.1  0 0 0 0 0.1  0 0 0 0 0.09  0 0 0 -2.2 1.25"/></filter>
<rect x="240" y="300" width="145" height="305" filter="url(#mnoise)" opacity="0.5"/>
</g>
<path d="M300.0,305.0C289.5,307.5 287.5,320.7 282.0,327.0C276.5,333.3 271.3,336.8 267.0,343.0C262.7,349.2 258.8,357.3 256.0,364.0C253.2,370.7 251.5,376.2 250.0,383.0C248.5,389.8 247.6,396.5 247.0,405.0C246.4,413.5 246.4,424.5 246.4,434.0C246.4,443.5 246.7,455.0 247.0,462.0C247.3,469.0 246.8,472.2 248.0,476.0C249.2,479.8 251.9,482.2 254.0,485.0C256.1,487.8 258.9,488.3 260.5,493.0C262.1,497.7 263.3,506.7 263.5,513.0C263.7,519.3 263.1,526.3 261.8,531.0C260.6,535.7 257.6,538.3 256.0,541.0C254.4,543.7 252.8,542.2 252.0,547.0C251.2,551.8 251.5,562.3 251.5,570.0C251.5,577.7 251.3,588.3 252.0,593.0C252.7,597.7 248.3,597.3 255.5,598.4C262.7,599.5 282.1,599.5 295.0,599.5C307.9,599.5 326.1,599.5 333.0,598.4C339.9,597.3 336.1,597.7 336.7,593.0C337.3,588.3 336.8,577.2 336.7,570.0C336.6,562.8 336.8,554.3 336.0,550.0C335.2,545.7 333.7,546.2 332.0,544.0C330.3,541.8 327.8,542.2 326.0,537.0C324.2,531.8 321.8,520.5 321.5,513.0C321.2,505.5 322.8,497.2 324.5,492.0C326.2,486.8 328.4,484.6 332.0,482.0C335.6,479.4 340.8,478.0 346.0,476.5C351.2,475.0 357.9,474.2 363.0,473.0C368.1,471.8 373.8,474.2 376.5,469.5C379.2,464.8 378.6,456.6 379.0,445.0C379.4,433.4 379.7,408.9 379.0,400.0C378.3,391.1 378.2,393.3 375.0,391.5C371.8,389.7 366.8,390.0 360.0,389.0C353.2,388.0 340.8,386.8 334.0,385.4C327.2,384.0 322.9,383.3 319.0,380.7C315.1,378.1 312.2,374.1 310.5,370.0C308.8,365.9 307.8,360.8 308.5,356.0C309.2,351.2 311.1,345.6 314.6,341.0C318.2,336.4 324.7,333.3 329.8,328.5C334.9,323.7 350.0,315.9 345.0,312.0C340.0,308.1 310.5,302.5 300.0,305.0Z" fill="none" stroke="#2e2d2a" stroke-width="1"/>
<path d="M125,162h1v1h-1zM125,192h1v1h-1zM125,222h1v1h-1zM125,252h1v1h-1zM125,282h1v1h-1zM125,312h1v1h-1zM125,342h1v1h-1zM125,372h1v1h-1zM125,402h1v1h-1zM125,432h1v1h-1zM125,462h1v1h-1zM125,492h1v1h-1zM125,522h1v1h-1zM125,552h1v1h-1zM125,582h1v1h-1zM125,612h1v1h-1zM125,642h1v1h-1zM125,672h1v1h-1zM125,702h1v1h-1zM155,162h1v1h-1zM155,192h1v1h-1zM155,222h1v1h-1zM155,252h1v1h-1zM155,282h1v1h-1zM155,312h1v1h-1zM155,342h1v1h-1zM155,372h1v1h-1zM155,402h1v1h-1zM155,432h1v1h-1zM155,462h1v1h-1zM155,492h1v1h-1zM155,522h1v1h-1zM155,552h1v1h-1zM155,582h1v1h-1zM155,612h1v1h-1zM155,642h1v1h-1zM155,672h1v1h-1zM155,702h1v1h-1zM185,162h1v1h-1zM185,192h1v1h-1zM185,222h1v1h-1zM185,252h1v1h-1zM185,282h1v1h-1zM185,312h1v1h-1zM185,342h1v1h-1zM185,372h1v1h-1zM185,402h1v1h-1zM185,432h1v1h-1zM185,462h1v1h-1zM185,492h1v1h-1zM185,522h1v1h-1zM185,552h1v1h-1zM185,582h1v1h-1zM185,612h1v1h-1zM185,642h1v1h-1zM185,672h1v1h-1zM185,702h1v1h-1zM215,162h1v1h-1zM215,192h1v1h-1zM215,222h1v1h-1zM215,252h1v1h-1zM215,282h1v1h-1zM215,312h1v1h-1zM215,342h1v1h-1zM215,372h1v1h-1zM215,402h1v1h-1zM215,432h1v1h-1zM215,462h1v1h-1zM215,492h1v1h-1zM215,522h1v1h-1zM215,552h1v1h-1zM215,582h1v1h-1zM215,612h1v1h-1zM215,642h1v1h-1zM215,672h1v1h-1zM215,702h1v1h-1zM245,162h1v1h-1zM245,192h1v1h-1zM245,222h1v1h-1zM245,252h1v1h-1zM245,282h1v1h-1zM245,312h1v1h-1zM245,342h1v1h-1zM245,372h1v1h-1zM245,402h1v1h-1zM245,432h1v1h-1zM245,462h1v1h-1zM245,492h1v1h-1zM245,522h1v1h-1zM245,552h1v1h-1zM245,582h1v1h-1zM245,612h1v1h-1zM245,642h1v1h-1zM245,672h1v1h-1zM245,702h1v1h-1zM275,162h1v1h-1zM275,192h1v1h-1zM275,222h1v1h-1zM275,252h1v1h-1zM275,282h1v1h-1zM275,312h1v1h-1zM275,342h1v1h-1zM275,372h1v1h-1zM275,402h1v1h-1zM275,432h1v1h-1zM275,462h1v1h-1zM275,492h1v1h-1zM275,522h1v1h-1zM275,552h1v1h-1zM275,582h1v1h-1zM275,612h1v1h-1zM275,642h1v1h-1zM275,672h1v1h-1zM275,702h1v1h-1zM305,162h1v1h-1zM305,192h1v1h-1zM305,222h1v1h-1zM305,252h1v1h-1zM305,282h1v1h-1zM305,312h1v1h-1zM305,342h1v1h-1zM305,372h1v1h-1zM305,402h1v1h-1zM305,432h1v1h-1zM305,462h1v1h-1zM305,492h1v1h-1zM305,522h1v1h-1zM305,552h1v1h-1zM305,582h1v1h-1zM305,612h1v1h-1zM305,642h1v1h-1zM305,672h1v1h-1zM305,702h1v1h-1zM335,162h1v1h-1zM335,192h1v1h-1zM335,222h1v1h-1zM335,252h1v1h-1zM335,282h1v1h-1zM335,312h1v1h-1zM335,342h1v1h-1zM335,372h1v1h-1zM335,402h1v1h-1zM335,432h1v1h-1zM335,462h1v1h-1zM335,492h1v1h-1zM335,522h1v1h-1zM335,552h1v1h-1zM335,582h1v1h-1zM335,612h1v1h-1zM335,642h1v1h-1zM335,672h1v1h-1zM335,702h1v1h-1zM365,162h1v1h-1zM365,192h1v1h-1zM365,222h1v1h-1zM365,252h1v1h-1zM365,282h1v1h-1zM365,312h1v1h-1zM365,342h1v1h-1zM365,372h1v1h-1zM365,402h1v1h-1zM365,432h1v1h-1zM365,462h1v1h-1zM365,492h1v1h-1zM365,522h1v1h-1zM365,552h1v1h-1zM365,582h1v1h-1zM365,612h1v1h-1zM365,642h1v1h-1zM365,672h1v1h-1zM365,702h1v1h-1zM395,162h1v1h-1zM395,192h1v1h-1zM395,222h1v1h-1zM395,252h1v1h-1zM395,282h1v1h-1zM395,312h1v1h-1zM395,342h1v1h-1zM395,372h1v1h-1zM395,402h1v1h-1zM395,432h1v1h-1zM395,462h1v1h-1zM395,492h1v1h-1zM395,522h1v1h-1zM395,552h1v1h-1zM395,582h1v1h-1zM395,612h1v1h-1zM395,642h1v1h-1zM395,672h1v1h-1zM395,702h1v1h-1zM425,162h1v1h-1zM425,192h1v1h-1zM425,222h1v1h-1zM425,252h1v1h-1zM425,282h1v1h-1zM425,312h1v1h-1zM425,342h1v1h-1zM425,372h1v1h-1zM425,402h1v1h-1zM425,432h1v1h-1zM425,462h1v1h-1zM425,492h1v1h-1zM425,522h1v1h-1zM425,552h1v1h-1zM425,582h1v1h-1zM425,612h1v1h-1zM425,642h1v1h-1zM425,672h1v1h-1zM425,702h1v1h-1zM455,162h1v1h-1zM455,192h1v1h-1zM455,222h1v1h-1zM455,252h1v1h-1zM455,282h1v1h-1zM455,312h1v1h-1zM455,342h1v1h-1zM455,372h1v1h-1zM455,402h1v1h-1zM455,432h1v1h-1zM455,462h1v1h-1zM455,492h1v1h-1zM455,522h1v1h-1zM455,552h1v1h-1zM455,582h1v1h-1zM455,612h1v1h-1zM455,642h1v1h-1zM455,672h1v1h-1zM455,702h1v1h-1zM485,162h1v1h-1zM485,192h1v1h-1zM485,222h1v1h-1zM485,252h1v1h-1zM485,282h1v1h-1zM485,312h1v1h-1zM485,342h1v1h-1zM485,372h1v1h-1zM485,402h1v1h-1zM485,432h1v1h-1zM485,462h1v1h-1zM485,492h1v1h-1zM485,522h1v1h-1zM485,552h1v1h-1zM485,582h1v1h-1zM485,612h1v1h-1zM485,642h1v1h-1zM485,672h1v1h-1zM485,702h1v1h-1zM515,162h1v1h-1zM515,192h1v1h-1zM515,222h1v1h-1zM515,252h1v1h-1zM515,282h1v1h-1zM515,312h1v1h-1zM515,342h1v1h-1zM515,372h1v1h-1zM515,402h1v1h-1zM515,432h1v1h-1zM515,462h1v1h-1zM515,492h1v1h-1zM515,522h1v1h-1zM515,552h1v1h-1zM515,582h1v1h-1zM515,612h1v1h-1zM515,642h1v1h-1zM515,672h1v1h-1zM515,702h1v1h-1zM545,162h1v1h-1zM545,192h1v1h-1zM545,222h1v1h-1zM545,252h1v1h-1zM545,282h1v1h-1zM545,312h1v1h-1zM545,342h1v1h-1zM545,372h1v1h-1zM545,402h1v1h-1zM545,432h1v1h-1zM545,462h1v1h-1zM545,492h1v1h-1zM545,522h1v1h-1zM545,552h1v1h-1zM545,582h1v1h-1zM545,612h1v1h-1zM545,642h1v1h-1zM545,672h1v1h-1zM545,702h1v1h-1zM575,162h1v1h-1zM575,192h1v1h-1zM575,222h1v1h-1zM575,252h1v1h-1zM575,282h1v1h-1zM575,312h1v1h-1zM575,342h1v1h-1zM575,372h1v1h-1zM575,402h1v1h-1zM575,432h1v1h-1zM575,462h1v1h-1zM575,492h1v1h-1zM575,522h1v1h-1zM575,552h1v1h-1zM575,582h1v1h-1zM575,612h1v1h-1zM575,642h1v1h-1zM575,672h1v1h-1zM575,702h1v1h-1zM605,162h1v1h-1zM605,192h1v1h-1zM605,222h1v1h-1zM605,252h1v1h-1zM605,282h1v1h-1zM605,312h1v1h-1zM605,342h1v1h-1zM605,372h1v1h-1zM605,402h1v1h-1zM605,432h1v1h-1zM605,462h1v1h-1zM605,492h1v1h-1zM605,522h1v1h-1zM605,552h1v1h-1zM605,582h1v1h-1zM605,612h1v1h-1zM605,642h1v1h-1zM605,672h1v1h-1zM605,702h1v1h-1zM635,162h1v1h-1zM635,192h1v1h-1zM635,222h1v1h-1zM635,252h1v1h-1zM635,282h1v1h-1zM635,312h1v1h-1zM635,342h1v1h-1zM635,372h1v1h-1zM635,402h1v1h-1zM635,432h1v1h-1zM635,462h1v1h-1zM635,492h1v1h-1zM635,522h1v1h-1zM635,552h1v1h-1zM635,582h1v1h-1zM635,612h1v1h-1zM635,642h1v1h-1zM635,672h1v1h-1zM635,702h1v1h-1zM665,162h1v1h-1zM665,192h1v1h-1zM665,222h1v1h-1zM665,252h1v1h-1zM665,282h1v1h-1zM665,312h1v1h-1zM665,342h1v1h-1zM665,372h1v1h-1zM665,402h1v1h-1zM665,432h1v1h-1zM665,462h1v1h-1zM665,492h1v1h-1zM665,522h1v1h-1zM665,552h1v1h-1zM665,582h1v1h-1zM665,612h1v1h-1zM665,642h1v1h-1zM665,672h1v1h-1zM665,702h1v1h-1zM695,162h1v1h-1zM695,192h1v1h-1zM695,222h1v1h-1zM695,252h1v1h-1zM695,282h1v1h-1zM695,312h1v1h-1zM695,342h1v1h-1zM695,372h1v1h-1zM695,402h1v1h-1zM695,432h1v1h-1zM695,462h1v1h-1zM695,492h1v1h-1zM695,522h1v1h-1zM695,552h1v1h-1zM695,582h1v1h-1zM695,612h1v1h-1zM695,642h1v1h-1zM695,672h1v1h-1zM695,702h1v1h-1zM725,162h1v1h-1zM725,192h1v1h-1zM725,222h1v1h-1zM725,252h1v1h-1zM725,282h1v1h-1zM725,312h1v1h-1zM725,342h1v1h-1zM725,372h1v1h-1zM725,402h1v1h-1zM725,432h1v1h-1zM725,462h1v1h-1zM725,492h1v1h-1zM725,522h1v1h-1zM725,552h1v1h-1zM725,582h1v1h-1zM725,612h1v1h-1zM725,642h1v1h-1zM725,672h1v1h-1zM725,702h1v1h-1zM755,162h1v1h-1zM755,192h1v1h-1zM755,222h1v1h-1zM755,252h1v1h-1zM755,282h1v1h-1zM755,312h1v1h-1zM755,342h1v1h-1zM755,372h1v1h-1zM755,402h1v1h-1zM755,432h1v1h-1zM755,462h1v1h-1zM755,492h1v1h-1zM755,522h1v1h-1zM755,552h1v1h-1zM755,582h1v1h-1zM755,612h1v1h-1zM755,642h1v1h-1zM755,672h1v1h-1zM755,702h1v1h-1zM785,162h1v1h-1zM785,192h1v1h-1zM785,222h1v1h-1zM785,252h1v1h-1zM785,282h1v1h-1zM785,312h1v1h-1zM785,342h1v1h-1zM785,372h1v1h-1zM785,402h1v1h-1zM785,432h1v1h-1zM785,462h1v1h-1zM785,492h1v1h-1zM785,522h1v1h-1zM785,552h1v1h-1zM785,582h1v1h-1zM785,612h1v1h-1zM785,642h1v1h-1zM785,672h1v1h-1zM785,702h1v1h-1zM815,162h1v1h-1zM815,192h1v1h-1zM815,222h1v1h-1zM815,252h1v1h-1zM815,282h1v1h-1zM815,312h1v1h-1zM815,342h1v1h-1zM815,372h1v1h-1zM815,402h1v1h-1zM815,432h1v1h-1zM815,462h1v1h-1zM815,492h1v1h-1zM815,522h1v1h-1zM815,552h1v1h-1zM815,582h1v1h-1zM815,612h1v1h-1zM815,642h1v1h-1zM815,672h1v1h-1zM815,702h1v1h-1zM845,162h1v1h-1zM845,192h1v1h-1zM845,222h1v1h-1zM845,252h1v1h-1zM845,282h1v1h-1zM845,312h1v1h-1zM845,342h1v1h-1zM845,372h1v1h-1zM845,402h1v1h-1zM845,432h1v1h-1zM845,462h1v1h-1zM845,492h1v1h-1zM845,522h1v1h-1zM845,552h1v1h-1zM845,582h1v1h-1zM845,612h1v1h-1zM845,642h1v1h-1zM845,672h1v1h-1zM845,702h1v1h-1zM875,162h1v1h-1zM875,192h1v1h-1zM875,222h1v1h-1zM875,252h1v1h-1zM875,282h1v1h-1zM875,312h1v1h-1zM875,342h1v1h-1zM875,372h1v1h-1zM875,402h1v1h-1zM875,432h1v1h-1zM875,462h1v1h-1zM875,492h1v1h-1zM875,522h1v1h-1zM875,552h1v1h-1zM875,582h1v1h-1zM875,612h1v1h-1zM875,642h1v1h-1zM875,672h1v1h-1zM875,702h1v1h-1zM905,162h1v1h-1zM905,192h1v1h-1zM905,222h1v1h-1zM905,252h1v1h-1zM905,282h1v1h-1zM905,312h1v1h-1zM905,342h1v1h-1zM905,372h1v1h-1zM905,402h1v1h-1zM905,432h1v1h-1zM905,462h1v1h-1zM905,492h1v1h-1zM905,522h1v1h-1zM905,552h1v1h-1zM905,582h1v1h-1zM905,612h1v1h-1zM905,642h1v1h-1zM905,672h1v1h-1zM905,702h1v1h-1zM935,162h1v1h-1zM935,192h1v1h-1zM935,222h1v1h-1zM935,252h1v1h-1zM935,282h1v1h-1zM935,312h1v1h-1zM935,342h1v1h-1zM935,372h1v1h-1zM935,402h1v1h-1zM935,432h1v1h-1zM935,462h1v1h-1zM935,492h1v1h-1zM935,522h1v1h-1zM935,552h1v1h-1zM935,582h1v1h-1zM935,612h1v1h-1zM935,642h1v1h-1zM935,672h1v1h-1zM935,702h1v1h-1zM965,162h1v1h-1zM965,192h1v1h-1zM965,222h1v1h-1zM965,252h1v1h-1zM965,282h1v1h-1zM965,312h1v1h-1zM965,342h1v1h-1zM965,372h1v1h-1zM965,402h1v1h-1zM965,432h1v1h-1zM965,462h1v1h-1zM965,492h1v1h-1zM965,522h1v1h-1zM965,552h1v1h-1zM965,582h1v1h-1zM965,612h1v1h-1zM965,642h1v1h-1zM965,672h1v1h-1zM965,702h1v1h-1zM995,162h1v1h-1zM995,192h1v1h-1zM995,222h1v1h-1zM995,252h1v1h-1zM995,282h1v1h-1zM995,312h1v1h-1zM995,342h1v1h-1zM995,372h1v1h-1zM995,402h1v1h-1zM995,432h1v1h-1zM995,462h1v1h-1zM995,492h1v1h-1zM995,522h1v1h-1zM995,552h1v1h-1zM995,582h1v1h-1zM995,612h1v1h-1zM995,642h1v1h-1zM995,672h1v1h-1zM995,702h1v1h-1zM1025,162h1v1h-1zM1025,192h1v1h-1zM1025,222h1v1h-1zM1025,252h1v1h-1zM1025,282h1v1h-1zM1025,312h1v1h-1zM1025,342h1v1h-1zM1025,372h1v1h-1zM1025,402h1v1h-1zM1025,432h1v1h-1zM1025,462h1v1h-1zM1025,492h1v1h-1zM1025,522h1v1h-1zM1025,552h1v1h-1zM1025,582h1v1h-1zM1025,612h1v1h-1zM1025,642h1v1h-1zM1025,672h1v1h-1zM1025,702h1v1h-1zM1055,162h1v1h-1zM1055,192h1v1h-1zM1055,222h1v1h-1zM1055,252h1v1h-1zM1055,282h1v1h-1zM1055,312h1v1h-1zM1055,342h1v1h-1zM1055,372h1v1h-1zM1055,402h1v1h-1zM1055,432h1v1h-1zM1055,462h1v1h-1zM1055,492h1v1h-1zM1055,522h1v1h-1zM1055,552h1v1h-1zM1055,582h1v1h-1zM1055,612h1v1h-1zM1055,642h1v1h-1zM1055,672h1v1h-1zM1055,702h1v1h-1zM1085,162h1v1h-1zM1085,192h1v1h-1zM1085,222h1v1h-1zM1085,252h1v1h-1zM1085,282h1v1h-1zM1085,312h1v1h-1zM1085,342h1v1h-1zM1085,372h1v1h-1zM1085,402h1v1h-1zM1085,432h1v1h-1zM1085,462h1v1h-1zM1085,492h1v1h-1zM1085,522h1v1h-1zM1085,552h1v1h-1zM1085,582h1v1h-1zM1085,612h1v1h-1zM1085,642h1v1h-1zM1085,672h1v1h-1zM1085,702h1v1h-1zM1115,162h1v1h-1zM1115,192h1v1h-1zM1115,222h1v1h-1zM1115,252h1v1h-1zM1115,282h1v1h-1zM1115,312h1v1h-1zM1115,342h1v1h-1zM1115,372h1v1h-1zM1115,402h1v1h-1zM1115,432h1v1h-1zM1115,462h1v1h-1zM1115,492h1v1h-1zM1115,522h1v1h-1zM1115,552h1v1h-1zM1115,582h1v1h-1zM1115,612h1v1h-1zM1115,642h1v1h-1zM1115,672h1v1h-1zM1115,702h1v1h-1z" fill="#fff" fill-opacity="0.28"/>
<line x1="245.5" y1="155" x2="245.5" y2="732" stroke="#fff" stroke-opacity="0.09"/>
<line x1="545.5" y1="155" x2="545.5" y2="732" stroke="#fff" stroke-opacity="0.07"/>
<line x1="845.5" y1="155" x2="845.5" y2="732" stroke="#fff" stroke-opacity="0.09"/>
<line x1="95" y1="432.5" x2="1139" y2="432.5" stroke="#fff" stroke-opacity="0.07"/>
<g stroke="#e03030" stroke-opacity="0.8" fill="none" stroke-width="1"><circle cx="245" cy="432" r="4.5"/><path d="M226,432.5h37M245.5,414v37"/></g>
<rect x="191.5" y="240.5" width="10" height="10" fill="#0000aa" stroke="#5a5ab8" stroke-width="1"/>
<rect x="993.5" y="176.5" width="10" height="10" fill="#0000aa" stroke="#5a5ab8" stroke-width="1"/>
<rect x="1024.5" y="561.5" width="10" height="10" fill="#0000aa" stroke="#5a5ab8" stroke-width="1"/>
<rect x="222.5" y="625.5" width="10" height="10" fill="#0000aa" stroke="#5a5ab8" stroke-width="1"/>
</g>
<defs><radialGradient id="ring" cx="882" cy="578" r="39.5" gradientUnits="userSpaceOnUse"><stop offset="0" stop-color="#8aa0b8" stop-opacity="0"/><stop offset="0.76" stop-color="#8aa0b8" stop-opacity="0"/><stop offset="0.82" stop-color="#8aa0b8" stop-opacity="0.35"/><stop offset="0.86" stop-color="#8aa0b8" stop-opacity="0.55"/><stop offset="0.9" stop-color="#90a6bc" stop-opacity="0.6"/><stop offset="0.94" stop-color="#96aac0" stop-opacity="0.8"/><stop offset="0.98" stop-color="#90a4ba" stop-opacity="0.6"/><stop offset="1" stop-color="#90a4ba" stop-opacity="0"/></radialGradient></defs>
<circle cx="882" cy="578" r="39.5" fill="url(#ring)"/>
<circle cx="882" cy="578" r="33" fill="none" stroke="#a0b4c8" stroke-width="0.8" stroke-opacity="0.25"/>
<circle cx="882" cy="578" r="35.5" fill="none" stroke="#a0b4c8" stroke-width="0.8" stroke-opacity="0.3"/>
<circle cx="882" cy="578" r="37.5" fill="none" stroke="#a0b4c8" stroke-width="0.8" stroke-opacity="0.35"/>
<path d="M881.5,577.5L881.5,601L887,595.5L892,606.5L897,604.2L892.3,593.8L899,593.8Z" fill="#fff" stroke="#fff" stroke-width="3" stroke-linejoin="round"/>
<path d="M881.5,577.5L881.5,601L887,595.5L892,606.5L897,604.2L892.3,593.8L899,593.8Z" fill="#fff" stroke="#000" stroke-width="1.2" stroke-linejoin="round"/>
</svg>
<div id="hscroll"></div><div id="hthumb"></div><div id="vscroll"></div><div id="vthumb"></div><div id="zoomlbl">10 &lt; 100</div>
<div id="cmdhist"><span><i>Commande:</i> layeradd</span></div><div id="cmdbar"><span class="abs" style="left:1px;top:7px;font-size:13px;line-height:16px;color:#111;letter-spacing:0.1px">Commande :</span></div><div id="cmdinput"></div>
<div class="abs" style="left:1139px;top:750px;width:15px;height:20px;background:#f8f8f8"></div><div class="abs" style="left:1142px;top:750px;width:8px;height:17px;border-radius:4px;background:#7b7b7b"></div>
<div class="abs" style="left:1127px;top:772px;width:26px;height:26px;background:linear-gradient(#ececec,#f4f4f4);border:1px solid #bdbdbd"></div><svg class="abs" style="left:1133px;top:779px" width="15" height="12"><rect x="0.5" y="0.5" width="13" height="10" fill="#eee" stroke="#333" stroke-width="1"/><rect x="0" y="0" width="14" height="3" fill="#000"/><rect x="10" y="1" width="1.5" height="1" fill="#fff"/></svg>
<div class="abs" style="left:1154px;top:107px;width:2px;height:691px;background:#c9c9c9"></div>
<div id="lp"></div><div id="lptitle"><span class="abs" style="left:121px;top:5px;font-size:12px;line-height:15px;color:#333">Liste des calques</span></div><svg class="abs" style="left:1155px;top:107px" width="40" height="23"><circle cx="9" cy="11" r="7" fill="#707070"/><path d="M6,8l6,6M12,8l-6,6" stroke="#fff" stroke-width="2"/><circle cx="27" cy="11" r="7" fill="#707070"/><rect x="24" y="10" width="6" height="4" fill="none" stroke="#fff" stroke-width="1.2"/><path d="M26,10v-2h6v4h-2" fill="none" stroke="#fff" stroke-width="1.2"/></svg><div class="ltbtn" style="left:1155px;width:60px"></div><div class="ltbtn" style="left:1215px;width:60px"></div><div class="ltbtn" style="left:1275px;width:60px"></div><div class="ltbtn" style="left:1335px;width:60px"></div><div class="ltbtn" style="left:1395px;width:60px"></div><div class="abs" style="left:1155px;top:155px;width:300px;height:2px;background:#b8b8b8"></div><div class="lrow" style="top:157px;"><div class="sw" style="background:#fff;border:1px solid #000"></div><span style="">0</span></div><div class="lrow" style="top:177px;"><div class="sw" style="background:#000"></div><span style="">Image</span></div><div class="lrow" style="top:197px;background:#0a4ddb;"><div class="sw" style="background:#e33a4e;border:1px solid #444"></div><span style="color:#fff;">Traçage</span></div>
<div id="rtb"></div>
<svg class="abs" style="left:1155px;top:107px" width="345" height="450"><rect x="308" y="9" width="2" height="2" fill="#a0a0a0"/><rect x="314" y="9" width="2" height="2" fill="#a0a0a0"/><rect x="320" y="9" width="2" height="2" fill="#a0a0a0"/><rect x="326" y="9" width="2" height="2" fill="#a0a0a0"/><rect x="332" y="9" width="2" height="2" fill="#a0a0a0"/><rect x="301" y="13" width="43" height="42" rx="6" fill="#b9b9b9"/><rect x="308.5" y="20.5" width="27" height="27" fill="#fff" stroke="#333" stroke-width="1"/><rect x="308" y="20" width="28" height="5" fill="#000"/><rect x="309.5" y="21.5" width="3" height="3" fill="#fff"/><path d="M315,34l5,-3v10l-5,3z" fill="#aaa" stroke="#555" stroke-width="0.6"/><path d="M318,32l10,-4v10l-10,4z" fill="#f4f4f4" stroke="#555" stroke-width="0.7"/><path d="M321,39l4,-7l1,5" stroke="#e02020" stroke-width="0.8" fill="none"/><rect x="308.5" y="67.5" width="27" height="27" fill="#fff" stroke="#333" stroke-width="1"/><rect x="308" y="67" width="28" height="5" fill="#000"/><rect x="309.5" y="68.5" width="3" height="3" fill="#fff"/><rect x="314.5" y="77.5" width="11.5" height="8.5" fill="#fbf0c8" stroke="#555" stroke-width="0.7"/><circle cx="323.5" cy="85" r="5" fill="#fbf0c8" fill-opacity="0.8" stroke="#555" stroke-width="0.7"/><rect x="308.5" y="113.5" width="27" height="27" fill="#fff" stroke="#333" stroke-width="1"/><rect x="308" y="113" width="28" height="5" fill="#000"/><rect x="309.5" y="114.5" width="3" height="3" fill="#fff"/><rect x="312.5" y="122.5" width="19" height="12" rx="2" fill="#eef2f8" stroke="#b8c8e0" stroke-width="0.8"/><line x1="302" y1="154.5" x2="344" y2="154.5" stroke="#666" stroke-dasharray="1,2"/><rect x="308.5" y="169.5" width="27" height="27" fill="#fff" stroke="#333" stroke-width="1"/><rect x="308" y="169" width="28" height="5" fill="#000"/><rect x="309.5" y="170.5" width="3" height="3" fill="#fff"/><rect x="313" y="178" width="3" height="3" fill="#000"/><rect x="318.5" y="177.5" width="14" height="3.5" fill="none" stroke="#333" stroke-width="0.6"/><rect x="313" y="184" width="3" height="3" fill="#000"/><rect x="318.5" y="183.5" width="14" height="3.5" fill="none" stroke="#333" stroke-width="0.6"/><rect x="313" y="190" width="3" height="3" fill="#000"/><rect x="318.5" y="189.5" width="14" height="3.5" fill="none" stroke="#333" stroke-width="0.6"/><rect x="308.5" y="215.5" width="27" height="27" fill="#fff" stroke="#333" stroke-width="1"/><rect x="308" y="215" width="28" height="5" fill="#000"/><rect x="309.5" y="216.5" width="3" height="3" fill="#fff"/><path d="M314,226h16l-6,6v6l-4,2v-8z" fill="#777" stroke="#333" stroke-width="0.6"/><rect x="308.5" y="261.5" width="27" height="27" fill="#fff" stroke="#333" stroke-width="1"/><rect x="308" y="261" width="28" height="5" fill="#000"/><rect x="309.5" y="262.5" width="3" height="3" fill="#fff"/><path d="M314,272l6,5h8v6h-8l-6,5z" fill="#fff" stroke="#333" stroke-width="0.7"/><rect x="320" y="277" width="9" height="6" fill="#999"/><path d="M311,280h22" stroke="#e07070" stroke-width="0.6" stroke-dasharray="1.5,1"/><line x1="302" y1="303.5" x2="344" y2="303.5" stroke="#666" stroke-dasharray="1,2"/><rect x="301" y="310" width="43" height="43" rx="6" fill="#b9b9b9"/><rect x="308.5" y="317.5" width="27" height="27" fill="#fff" stroke="#333" stroke-width="1"/><rect x="308" y="317" width="28" height="5" fill="#000"/><rect x="309.5" y="318.5" width="3" height="3" fill="#fff"/><path d="M311,326h14M311,329.5h12M311,333h14M311,336.5h13" stroke="#888" stroke-width="0.8"/><path d="M308,340.5h28" stroke="#333" stroke-width="0.8"/><rect x="308.5" y="364.5" width="27" height="27" fill="#fff" stroke="#333" stroke-width="1"/><rect x="308" y="364" width="28" height="5" fill="#000"/><rect x="309.5" y="365.5" width="3" height="3" fill="#fff"/><rect x="315.5" y="371.5" width="14" height="16" rx="1" fill="#c89040" stroke="#8a5a20" stroke-width="0.7"/><rect x="317" y="374" width="11" height="12" fill="#f4f4f4"/><rect x="319" y="370" width="7" height="3" fill="#999"/><line x1="302" y1="406.5" x2="344" y2="406.5" stroke="#666" stroke-dasharray="1,2"/></svg><svg class="abs" style="left:1460px;top:527px" width="40" height="30"><path d="M5,5.5h7.5a4.6,4.6 0 0 1 0,9.2h-4M8.5,14.7h4a4.7,4.7 0 0 1 0,9.4h-7.5" stroke="#222" stroke-width="1.4" fill="none"/><path d="M18.5,5.5h6a6.5,6.5 0 0 1 6.5,6.5v5.6a6.5,6.5 0 0 1 -6.5,6.5h-6z" stroke="#222" stroke-width="1.4" fill="none"/></svg><svg class="abs" style="left:1155px;top:130px" width="300" height="90"><path d="M22,13C25,7 35,7 38,13C35,19 25,19 22,13z" fill="#000"/><path d="M25,13C27,10 33,10 35,13C33,16 27,16 25,13z" fill="#fff"/><circle cx="30" cy="13" r="2.6" fill="#000"/><path d="M82,13C85,7 95,7 98,13C95,19 85,19 82,13z" fill="#aaa"/><path d="M85,13C87,10 93,10 95,13C93,16 87,16 85,13z" fill="#eee"/><circle cx="90" cy="13" r="2.6" fill="#aaa"/><path d="M150,7v13M143.5,13.5h13" stroke="#e00000" stroke-width="3.2"/><path d="M203.5,13.5h13" stroke="#e00000" stroke-width="3.2"/><g transform="translate(262,22) scale(1.05)"><path d="M0,0l2,-5l10,-10l3,3l-10,10z" fill="#e8a830" stroke="#8a5a10" stroke-width="0.6"/><path d="M12,-15l3,3l1.5,-1.5l-3,-3z" fill="#e02020"/><path d="M0,0l2,-5l3,3z" fill="#f0d8b0"/><path d="M0,0l0.8,-2l1.2,1.2z" fill="#333"/></g><path d="M259,37C262,31 272,31 275,37C272,43 262,43 259,37z" fill="#000"/><path d="M262,37C264,34 270,34 272,37C270,40 264,40 262,37z" fill="#fff"/><circle cx="267" cy="37" r="2.6" fill="#000"/><path d="M286.5,36v-2.5a3.5,3.5 0 0 1 7,0v2.5" stroke="#b4b4b4" stroke-width="1.6" fill="none"/><rect x="285" y="36" width="10" height="7" fill="#b4b4b4"/><path d="M259,57C262,51 272,51 275,57C272,63 262,63 259,57z" fill="#000"/><path d="M262,57C264,54 270,54 272,57C270,60 264,60 262,57z" fill="#fff"/><circle cx="267" cy="57" r="2.6" fill="#000"/><path d="M286.5,56v-2.5a3.5,3.5 0 0 1 7,0v2.5" stroke="#b4b4b4" stroke-width="1.6" fill="none"/><rect x="285" y="56" width="10" height="7" fill="#b4b4b4"/><path d="M259,77C262,71 272,71 275,77C272,83 262,83 259,77z" fill="#000"/><path d="M262,77C264,74 270,74 272,77C270,80 264,80 262,77z" fill="#0a4ddb"/><circle cx="267" cy="77" r="2.6" fill="#000"/><path d="M286.5,76v-2.5a3.5,3.5 0 0 1 7,0v2.5" stroke="#aaaaaa" stroke-width="1.6" fill="none"/><rect x="285" y="76" width="10" height="7" fill="#aaaaaa"/><g transform="translate(240,85) scale(0.95)"><path d="M0,0l2,-5l10,-10l3,3l-10,10z" fill="#e8a830" stroke="#8a5a10" stroke-width="0.6"/><path d="M12,-15l3,3l1.5,-1.5l-3,-3z" fill="#e02020"/><path d="M0,0l2,-5l3,3z" fill="#f0d8b0"/><path d="M0,0l0.8,-2l1.2,1.2z" fill="#333"/></g></svg>
<div id="status"></div><span class="st" style="left:2px;top:806px">212.3333,-48.6667</span><span class="st" style="left:2px;top:826px">@212.3333,-48.6667</span><div class="abs" style="left:253px;top:802px;width:1px;height:40px;background:#8a8a8a"></div><span class="st" style="left:256px;top:806px">217.8391&lt;347°</span><span class="st" style="left:256px;top:826px">@217.8391&lt;347°</span><span class="st" style="left:520px;top:811.5px;width:178px;text-align:right;font-size:10px;letter-spacing:0.1px;line-height:11px">Sélectionne une entité ou une région<br>Déplacer l’entité ou la référence</span><div class="abs" style="left:506.5px;top:819px;width:7px;height:7px;border-radius:50%;background:#c6c6c6"></div><div class="abs" style="left:939px;top:819px;width:7px;height:7px;border-radius:50%;background:#c6c6c6"></div><div class="abs" style="left:1269px;top:819px;width:7px;height:7px;border-radius:50%;background:#c6c6c6"></div><span class="st" style="left:949px;top:811.5px;font-size:10px;letter-spacing:0.1px;line-height:11px">Entités sélectionnées :<br>1 Image sur calque "Image".</span><svg class="abs" style="left:716px;top:805px" width="21" height="32"><rect x="1.5" y="1.5" width="18" height="29" rx="9" fill="#fff" stroke="#333" stroke-width="1"/><path d="M1.5,13.5h18" stroke="#333"/><rect x="9" y="3" width="3" height="7" rx="1.5" fill="none" stroke="#333"/></svg>
<div id="dd"><div class="ddi" style="top:5px">Point</div><div class="dda" style="top:3.5px">&#9654;</div><div class="ddi" style="top:24px">Ligne</div><div class="dda" style="top:22.5px">&#9654;</div><div class="ddi" style="top:43px">Arc</div><div class="dda" style="top:41.5px">&#9654;</div><div class="ddi" style="top:62px">Cercle</div><div class="dda" style="top:60.5px">&#9654;</div><div class="ddi" style="top:81px">Ellipse</div><div class="dda" style="top:79.5px">&#9654;</div><div class="ddi" style="top:100px">Spline</div><div class="dda" style="top:98.5px">&#9654;</div><div class="ddi" style="top:119px">Polyligne</div><div class="dda" style="top:117.5px">&#9654;</div><div class="ddi" style="top:138px">Forme</div><div class="dda" style="top:136.5px">&#9654;</div><div class="ddi" style="top:157px">Hachure</div><div class="dda" style="top:155.5px">&#9654;</div><div class="ddi" style="top:176px">Fenêtre de présentation</div><div class="dda" style="top:174.5px">&#9654;</div><div class="ddi" style="top:195px">Anneau (RI)</div><div class="ddi" style="top:214px">Objet de nettoyage (WP)</div><div id="ddsep"></div><div class="ddi" style="top:245px">Texte... (TE)</div><div class="ddi" style="top:264px">Insérer Bitmap... (IM)</div><div class="ddi" style="top:283px">Trace un Bitmap...</div></div>
<svg class="abs" style="left:275px;top:0px;pointer-events:none" width="73" height="30"><rect x="9" y="0" width="55" height="21" fill="#e85050" fill-opacity="0.25"/><defs><linearGradient id="gl2840" x1="0" x2="1"><stop offset="0" stop-color="#f25a5a" stop-opacity="0"/><stop offset="1" stop-color="#f25a5a" stop-opacity="0.8"/></linearGradient><linearGradient id="gr2840" x1="0" x2="1"><stop offset="0" stop-color="#f25a5a" stop-opacity="0.8"/><stop offset="1" stop-color="#f25a5a" stop-opacity="0"/></linearGradient><linearGradient id="gt2840" x1="0" x2="0" y1="0" y2="1"><stop offset="0" stop-color="#f25a5a" stop-opacity="0"/><stop offset="1" stop-color="#f25a5a" stop-opacity="0.8"/></linearGradient><linearGradient id="gb2840" x1="0" x2="0" y1="0" y2="1"><stop offset="0" stop-color="#f25a5a" stop-opacity="0.8"/><stop offset="1" stop-color="#f25a5a" stop-opacity="0"/></linearGradient></defs><rect x="9" y="-1" width="55" height="2" fill="#f25a5a" fill-opacity="0.8"/><rect x="0" y="-1" width="9" height="2" fill="url(#gl2840)"/><rect x="64" y="-1" width="9" height="2" fill="url(#gr2840)"/><rect x="9" y="20" width="55" height="2" fill="#f25a5a" fill-opacity="0.8"/><rect x="0" y="20" width="9" height="2" fill="url(#gl2840)"/><rect x="64" y="20" width="9" height="2" fill="url(#gr2840)"/><rect x="8" y="0" width="2" height="21" fill="#f25a5a" fill-opacity="0.8"/><rect x="8" y="21" width="2" height="9" fill="url(#gb2840)"/><rect x="63" y="0" width="2" height="21" fill="#f25a5a" fill-opacity="0.8"/><rect x="63" y="21" width="2" height="9" fill="url(#gb2840)"/></svg>
<svg class="abs" style="left:275px;top:297px;pointer-events:none" width="261" height="37"><rect x="9" y="9" width="243" height="19" fill="#e85050" fill-opacity="0.25"/><defs><linearGradient id="gl284306" x1="0" x2="1"><stop offset="0" stop-color="#f25a5a" stop-opacity="0"/><stop offset="1" stop-color="#f25a5a" stop-opacity="0.8"/></linearGradient><linearGradient id="gr284306" x1="0" x2="1"><stop offset="0" stop-color="#f25a5a" stop-opacity="0.8"/><stop offset="1" stop-color="#f25a5a" stop-opacity="0"/></linearGradient><linearGradient id="gt284306" x1="0" x2="0" y1="0" y2="1"><stop offset="0" stop-color="#f25a5a" stop-opacity="0"/><stop offset="1" stop-color="#f25a5a" stop-opacity="0.8"/></linearGradient><linearGradient id="gb284306" x1="0" x2="0" y1="0" y2="1"><stop offset="0" stop-color="#f25a5a" stop-opacity="0.8"/><stop offset="1" stop-color="#f25a5a" stop-opacity="0"/></linearGradient></defs><rect x="9" y="8" width="243" height="2" fill="#f25a5a" fill-opacity="0.8"/><rect x="0" y="8" width="9" height="2" fill="url(#gl284306)"/><rect x="252" y="8" width="9" height="2" fill="url(#gr284306)"/><rect x="9" y="27" width="243" height="2" fill="#f25a5a" fill-opacity="0.8"/><rect x="0" y="27" width="9" height="2" fill="url(#gl284306)"/><rect x="252" y="27" width="9" height="2" fill="url(#gr284306)"/><rect x="8" y="9" width="2" height="19" fill="#f25a5a" fill-opacity="0.8"/><rect x="8" y="0" width="2" height="9" fill="url(#gt284306)"/><rect x="8" y="28" width="2" height="9" fill="url(#gb284306)"/><rect x="251" y="9" width="2" height="19" fill="#f25a5a" fill-opacity="0.8"/><rect x="251" y="0" width="2" height="9" fill="url(#gt284306)"/><rect x="251" y="28" width="2" height="9" fill="url(#gb284306)"/></svg>
</body></html>
